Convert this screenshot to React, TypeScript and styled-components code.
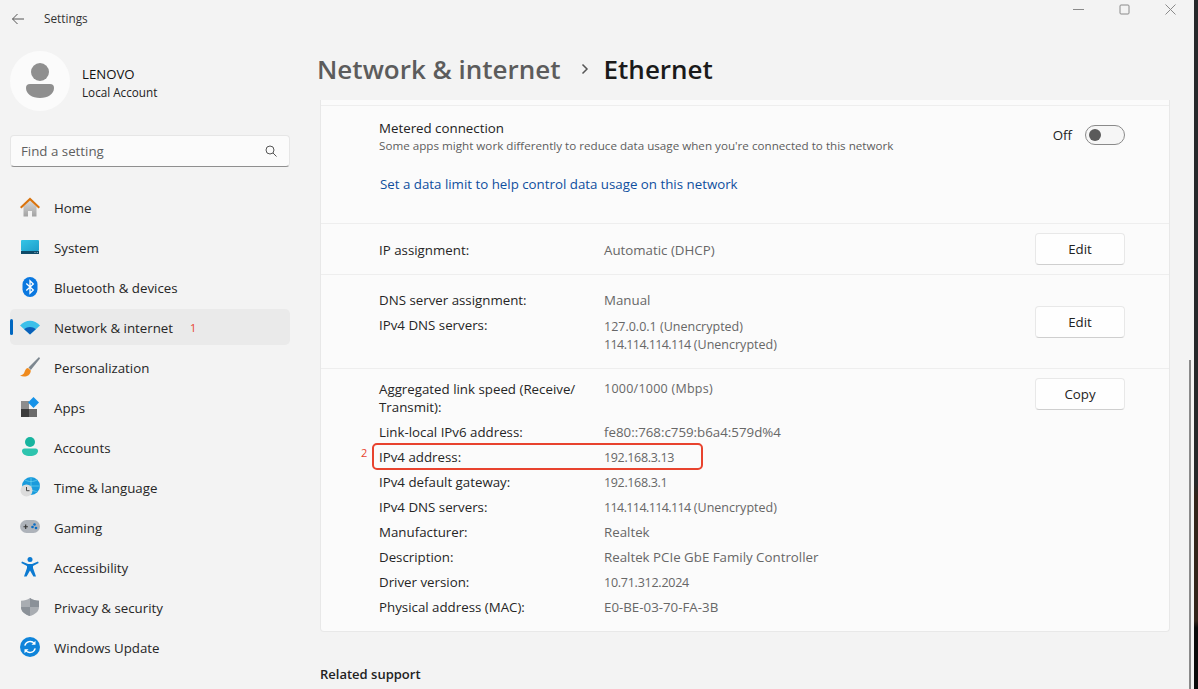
import styled, { createGlobalStyle } from 'styled-components';
import { ReactNode } from 'react';

const GlobalStyle = createGlobalStyle`
  html, body {
    margin: 0;
    padding: 0;
    height: 100%;
    overflow: hidden;
    background: #f3f3f3;
    font-family: "Open Sans", "Noto Sans", sans-serif;
    color: #1b1b1b;
  }
`;

const Window = styled.div`
  position: relative;
  display: flex;
  flex-direction: column;
  width: 1198px;
  height: 689px;
  overflow: hidden;
  background: #f3f3f3;
  border-right: 4px solid;
  border-image: linear-gradient(#26282a 0 70%, #33241a 72% 90%, #0a0a0a 91%) 1;
  box-sizing: border-box;
`;

const TitleBar = styled.div`
  display: flex;
  align-items: center;
  height: 38px;
  padding-left: 11px;
  flex: none;
`;

const BackButton = styled.svg`
  width: 14px;
  height: 14px;
  margin-right: 19px;
`;

const AppTitle = styled.span`
  padding-bottom: 2px;
  font-size: 11.8px;
  color: #333;
`;

const WindowControls = styled.div`
  display: flex;
  align-items: flex-start;
  gap: 35px;
  margin-left: auto;
  margin-right: 18px;
  align-self: flex-start;
  padding-top: 4px;
`;

const Body = styled.div`
  display: flex;
  flex: 1;
  min-height: 0;
`;

const Sidebar = styled.nav`
  width: 280px;
  flex: none;
  padding: 13px 0 0 10px;
`;

const Profile = styled.div`
  display: flex;
  align-items: center;
  gap: 12px;
`;

const Avatar = styled.div`
  display: flex;
  align-items: center;
  justify-content: center;
  width: 60px;
  height: 60px;
  border-radius: 50%;
  background: #fbfbfb;
`;

const ProfileText = styled.div`
  padding-top: 4px;
`;

const ProfileName = styled.div`
  font-size: 13.2px;
  font-weight: 500;
  line-height: 18px;
  color: #111;
`;

const ProfileSub = styled.div`
  font-size: 11.7px;
  line-height: 18px;
  color: #222;
`;

const SearchBox = styled.div`
  display: flex;
  align-items: center;
  justify-content: space-between;
  box-sizing: border-box;
  width: 280px;
  height: 32px;
  margin-top: 24px;
  padding: 0 12px 0 10px;
  background: #fbfbfb;
  border: 1px solid #e6e6e6;
  border-bottom-color: #8f8f8f;
  border-radius: 4px;
  font-size: 13.3px;
  color: #5f5f5f;
`;

const NavList = styled.div`
  display: flex;
  flex-direction: column;
  margin-top: 22px;
`;

const NavRow = styled.div<{ $active?: boolean }>`
  position: relative;
  display: flex;
  align-items: center;
  height: 36px;
  margin-bottom: 4px;
  padding-left: 10px;
  border-radius: 5px;
  font-size: 13.3px;
  color: #262626;
  background: ${(p) => (p.$active ? '#eaeaea' : 'transparent')};
`;

const NavLabel = styled.span`
  padding-top: 1px;
`;

const ActiveMark = styled.span`
  position: absolute;
  left: 0;
  top: 10px;
  width: 3px;
  height: 16px;
  border-radius: 2px;
  background: #0067c0;
`;

const NavIcon = styled.svg`
  width: 20px;
  height: 20px;
  margin-right: 14px;
  flex: none;
`;

const Marker = styled.span`
  font-size: 11px;
  color: #e8432e;
`;

const NavMarker = styled(Marker)`
  margin-left: 17px;
  font-weight: 500;
`;

const Main = styled.main`
  position: relative;
  flex: 1;
  min-width: 0;
  padding: 0 0 0 30px;
`;

const Breadcrumb = styled.div`
  display: flex;
  align-items: center;
  box-sizing: border-box;
  height: 62px;
  margin-left: -3px;
  padding-bottom: 1px;
  font-size: 26px;
  font-weight: 600;
`;

const ParentCrumb = styled.span`
  color: #5c5c5c;
`;

const CrumbSeparator = styled.svg`
  width: 12px;
  height: 12px;
  margin: 1px 13px 0 18px;
`;

const CurrentCrumb = styled.span`
  color: #1a1a1a;
`;

const Card = styled.section`
  box-sizing: border-box;
  width: 850px;
  padding-top: 5px;
  background: #fbfbfb;
  border: 1px solid #e8e8e8;
  border-top: none;
  border-radius: 0 0 4px 4px;
`;

const Section = styled.div`
  position: relative;
  display: flex;
  justify-content: space-between;
  box-sizing: border-box;
  border-top: 1px solid #eeeeee;
  padding-left: 58px;
  padding-right: 44px;
`;

const MeteredSection = styled(Section)`
  height: 118px;
  padding-top: 13px;
`;

const SettingTitle = styled.div`
  font-size: 13.3px;
  line-height: 18px;
  color: #222;
`;

const SettingHint = styled.div`
  margin-top: 1px;
  font-size: 11.65px;
  line-height: 16px;
  color: #5d5d5d;
`;

const SettingLink = styled.div`
  margin-top: 21px;
  margin-left: 1px;
  font-size: 13.3px;
  line-height: 18px;
  color: #0f4f9e;
`;

const ToggleRow = styled.div`
  display: flex;
  align-items: center;
  align-self: flex-start;
  gap: 13px;
  height: 18px;
  margin-top: 7px;
  font-size: 13.3px;
  color: #222;
`;

const Toggle = styled.div`
  display: flex;
  align-items: center;
  box-sizing: border-box;
  width: 40px;
  height: 20px;
  padding: 0 0 1px 3px;
  border: 1px solid #8a8a8a;
  border-radius: 10px;
  background: #f6f6f6;
`;

const ToggleKnob = styled.span`
  width: 12px;
  height: 12px;
  border-radius: 50%;
  background: #5a5a5a;
`;

const InfoGrid = styled.div`
  display: grid;
  grid-template-columns: 225px 1fr;
  row-gap: 7px;
  align-self: flex-start;
  width: 520px;
  font-size: 13.3px;
  line-height: 18px;
`;

const InfoLabel = styled.div`
  color: #262626;
`;

const InfoValue = styled.div`
  color: #676767;
`;

// the reference font has narrow digits, so values made of numbers are set smaller
const NumberValue = styled(InfoValue)<{ $drop: number }>`
  margin-top: ${(p) => p.$drop}px;
  margin-bottom: ${(p) => -p.$drop}px;
  font-size: 12.5px;
`;

const NumberRun = styled.span<{ $spacing: number }>`
  letter-spacing: ${(p) => p.$spacing}px;
`;

const ActionButton = styled.div`
  display: flex;
  align-items: center;
  justify-content: center;
  flex: none;
  align-self: flex-start;
  width: 90px;
  height: 32px;
  box-sizing: border-box;
  background: #fefefe;
  border: 1px solid #e8e8e8;
  border-bottom-color: #cfcfcf;
  border-radius: 4px;
  font-size: 13.3px;
  color: #222;
`;

const IpSection = styled(Section)`
  height: 51px;
  padding-top: 17px;
  & > ${ActionButton} {
    margin-top: -8px;
  }
`;

const DnsSection = styled(Section)`
  height: 94px;
  padding-top: 16px;
  & > ${ActionButton} {
    margin-top: 15px;
  }
`;

const DetailsSection = styled(Section)`
  height: 263px;
  padding-top: 11px;
  & > ${ActionButton} {
    margin-top: -2px;
  }
`;

const Highlight = styled.div`
  position: absolute;
  left: 51px;
  top: 74px;
  width: 331px;
  height: 27px;
  box-sizing: border-box;
  border: 2.5px solid #e8432e;
  border-radius: 5px;
`;

const HighlightMarker = styled(Marker)`
  position: absolute;
  left: 40px;
  top: 76px;
`;

const RelatedTitle = styled.div`
  margin-top: 33px;
  font-size: 13px;
  font-weight: 600;
  line-height: 18px;
  color: #222;
`;

const ScrollThumb = styled.div`
  position: absolute;
  right: 3px;
  top: 360px;
  bottom: 0;
  width: 2px;
  background: #8a8a8a;
`;

const navItems: { label: string; icon: ReactNode; marker?: string; active?: boolean }[] = [
  {
    label: 'Home',
    icon: (
      <>
        <defs>
          <linearGradient id="homeBody" x1="0" y1="0" x2="0" y2="1">
            <stop offset="0" stopColor="#d8d8d8" />
            <stop offset="1" stopColor="#a2a2a2" />
          </linearGradient>
        </defs>
        <path d="M3.5 9.5 10 3.5l6.5 6V19.500H12V14H8v5.500H3.500z" fill="url(#homeBody)" />
        <path d="M0 10 10 .5 20 10l-1.400 1.500L10 3.400 1.400 11.500z" fill="#d9730d" />
      </>
    ),
  },
  {
    label: 'System',
    icon: (
      <>
        <defs>
          <linearGradient id="systemScreen" x1="0" y1="0" x2="1" y2="1">
            <stop offset="0" stopColor="#35c5e6" />
            <stop offset="1" stopColor="#1e9ecb" />
          </linearGradient>
        </defs>
        <rect x="1" y="3" width="18" height="11" rx="1" fill="url(#systemScreen)" />
        <rect x="1" y="14" width="18" height="3" fill="#0f4a68" />
        <path d="M14.500 15.500h1M16.800 15.500h1" stroke="#cde" strokeWidth=".8" />
      </>
    ),
  },
  {
    label: 'Bluetooth & devices',
    icon: (
      <>
        <rect x="2.500" y="0" width="15" height="20" rx="7.500" fill="#0a78e0" />
        <path d="M6.300 6.500 13.300 13 10 16.300V3.700L13.300 7 6.300 13.500" fill="none" stroke="#fff" strokeWidth="1.300" />
      </>
    ),
  },
  {
    label: 'Network & internet',
    active: true,
    marker: '1',
    icon: (
      <>
        <path d="M0 8.500C5.500 2 14.500 2 20 8.500L10 17.500z" fill="#3cc0ea" />
        <path d="M4.200 12.300c3.200-3.200 8.400-3.200 11.600 0L10 17.500z" fill="#0a5fb8" />
      </>
    ),
  },
  {
    label: 'Personalization',
    icon: (
      <>
        <path d="M19 0 8.500 10.500l2.300 2.400L20 1.500z" fill="#7d8790" />
        <path d="M8 11c-3 .5-3 3.500-4 5.200-.7 1.200-2.500 2-4 2.300 3.500 2 10.500 1.400 10.800-5z" fill="#ef8a1d" />
      </>
    ),
  },
  {
    label: 'Apps',
    icon: (
      <>
        <rect x="1" y="4" width="8" height="8" fill="#8d8d8d" />
        <rect x="1" y="12" width="8" height="8" fill="#3c3c3c" />
        <rect x="9" y="12" width="8" height="8" fill="#6a6a6a" />
        <path d="M13.500 0 19 5.500 13.500 11 8 5.500z" fill="#1592e8" />
      </>
    ),
  },
  {
    label: 'Accounts',
    icon: (
      <>
        <circle cx="10" cy="5" r="5" fill="#17b49f" />
        <path d="M2 14a2.500 2.500 0 0 1 2.500-2.500h11A2.500 2.500 0 0 1 18 14c0 3-3.500 5-8 5s-8-2-8-5z" fill="#2ec4ae" />
      </>
    ),
  },
  {
    label: 'Time & language',
    icon: (
      <>
        <circle cx="11" cy="9" r="9" fill="#1a9bdc" />
        <path d="M11 0v18M2 9h18M5 3c4 2 8 2 12 0M5 15c4-2 8-2 12 0" stroke="#6fd3ee" strokeWidth=".7" fill="none" />
        <circle cx="6.500" cy="13.500" r="6" fill="#dcdcdc" />
        <path d="M6.500 10v3.700h3" stroke="#444" strokeWidth="1" fill="none" />
      </>
    ),
  },
  {
    label: 'Gaming',
    icon: (
      <>
        <rect x="0" y="3" width="20" height="13" rx="6.500" fill="#aeb3ba" />
        <path d="M3.500 9.800h4.400M5.700 7.600V12" stroke="#333" strokeWidth="1.100" />
        <circle cx="14.500" cy="7.500" r="1.300" fill="#0a6cc4" />
        <circle cx="12.500" cy="10" r="1.300" fill="#0a6cc4" />
        <circle cx="16" cy="11" r="1.300" fill="#0a6cc4" />
      </>
    ),
  },
  {
    label: 'Accessibility',
    icon: (
      <>
        <circle cx="10" cy="2.500" r="2.500" fill="#0b7ad1" />
        <path d="M2 4.500 8 7h4l6-2.500.7 1.600L13 9v2l3 8.500h-2.600L10 13.500 6.600 19.500H4l3-8.500V9L1.300 6.100z" fill="#0b7ad1" />
      </>
    ),
  },
  {
    label: 'Privacy & security',
    icon: (
      <>
        <path d="M10 1c2.500 2 5.500 2.600 9 2.800V10c0 5-4.500 7.500-9 9-4.500-1.500-9-4-9-9V3.800C4.500 3.600 7.500 3 10 1z" fill="#a9adb2" />
        <path d="M10 1c2.500 2 5.500 2.600 9 2.800V10H10z" fill="#8b9198" />
        <path d="M10 10v9c-4.500-1.500-9-4-9-9z" fill="#8b9198" />
      </>
    ),
  },
  {
    label: 'Windows Update',
    icon: (
      <>
        <circle cx="10" cy="10" r="10" fill="#0f84da" />
        <path d="M4.800 8.600A5.500 5.500 0 0 1 14.400 6.600M15.200 11.400A5.500 5.500 0 0 1 5.600 13.400" stroke="#fff" strokeWidth="1.400" fill="none" />
        <path d="M15.500 3.800v4h-4zM4.500 16.200v-4h4z" fill="#fff" />
      </>
    ),
  },
];

export default function App() {
  return (
    <>
      <GlobalStyle />
      <Window>
        <TitleBar>
          <BackButton viewBox="0 0 14 14" fill="none" stroke="#555" strokeWidth="1">
            <path d="M13 7H1.500M6.500 2 1.500 7l5 5" />
          </BackButton>
          <AppTitle>Settings</AppTitle>
          <WindowControls>
            <svg width="11" height="11" viewBox="0 0 11 11" stroke="#8a8a8a" fill="none">
              <path d="M0 5.500h11" />
            </svg>
            <svg width="11" height="11" viewBox="0 0 11 11" stroke="#8a8a8a" fill="none">
              <rect x="1" y="1" width="9" height="9" rx="1" />
            </svg>
            <svg width="11" height="11" viewBox="0 0 11 11" stroke="#8a8a8a" fill="none">
              <path d="M.5.5l10 10M10.500.5l-10 10" />
            </svg>
          </WindowControls>
        </TitleBar>
        <Body>
          <Sidebar>
            <Profile>
              <Avatar>
                <svg width="30" height="36" viewBox="0 0 30 36" fill="#8f8f8f">
                  <circle cx="15" cy="9" r="9" />
                  <path d="M1 25a4 4 0 0 1 4-4h20a4 4 0 0 1 4 4c0 6-6 10-14 10S1 31 1 25z" />
                </svg>
              </Avatar>
              <ProfileText>
                <ProfileName>LENOVO</ProfileName>
                <ProfileSub>Local Account</ProfileSub>
              </ProfileText>
            </Profile>
            <SearchBox>
              Find a setting
              <svg width="12" height="12" viewBox="0 0 12 12" fill="none" stroke="#555" strokeWidth="1">
                <circle cx="5" cy="5" r="4" />
                <path d="M8 8l3.500 3.500" />
              </svg>
            </SearchBox>
            <NavList>
              {navItems.map((item) => (
                <NavRow key={item.label} $active={item.active}>
                  {item.active && <ActiveMark />}
                  <NavIcon viewBox="0 0 20 20">{item.icon}</NavIcon>
                  <NavLabel>{item.label}</NavLabel>
                  {item.marker && <NavMarker>{item.marker}</NavMarker>}
                </NavRow>
              ))}
            </NavList>
          </Sidebar>
          <Main>
            <Breadcrumb>
              <ParentCrumb>Network &amp; internet</ParentCrumb>
              <CrumbSeparator viewBox="0 0 12 12" fill="none" stroke="#555" strokeWidth="1.500">
                <path d="M3.500 1.500 8 6l-4.500 4.500" />
              </CrumbSeparator>
              <CurrentCrumb>Ethernet</CurrentCrumb>
            </Breadcrumb>
            <Card>
              <MeteredSection>
                <div>
                  <SettingTitle>Metered connection</SettingTitle>
                  <SettingHint>Some apps might work differently to reduce data usage when you're connected to this network</SettingHint>
                  <SettingLink>Set a data limit to help control data usage on this network</SettingLink>
                </div>
                <ToggleRow>
                  Off
                  <Toggle>
                    <ToggleKnob />
                  </Toggle>
                </ToggleRow>
              </MeteredSection>
              <IpSection>
                <InfoGrid>
                  <InfoLabel>IP assignment:</InfoLabel>
                  <InfoValue>Automatic (DHCP)</InfoValue>
                </InfoGrid>
                <ActionButton>Edit</ActionButton>
              </IpSection>
              <DnsSection>
                <InfoGrid>
                  <InfoLabel>DNS server assignment:</InfoLabel>
                  <InfoValue>Manual</InfoValue>
                  <InfoLabel>IPv4 DNS servers:</InfoLabel>
                  <NumberValue $drop={2}>
                    127.0.0.1 (Unencrypted)
                    <br />
                    <NumberRun $spacing={-0.6}>114.114.114.114</NumberRun> (Unencrypted)
                  </NumberValue>
                </InfoGrid>
                <ActionButton>Edit</ActionButton>
              </DnsSection>
              <DetailsSection>
                <InfoGrid>
                  <InfoLabel>
                    Aggregated link speed (Receive/
                    <br />
                    Transmit):
                  </InfoLabel>
                  <NumberValue $drop={0}>
                    <NumberRun $spacing={0.25}>1000/1000 (Mbps)</NumberRun>
                  </NumberValue>
                  <InfoLabel>Link-local IPv6 address:</InfoLabel>
                  <InfoValue>fe80::768:c759:b6a4:579d%4</InfoValue>
                  <InfoLabel>IPv4 address:</InfoLabel>
                  <NumberValue $drop={1}>
                    <NumberRun $spacing={-0.35}>192.168.3.13</NumberRun>
                  </NumberValue>
                  <InfoLabel>IPv4 default gateway:</InfoLabel>
                  <NumberValue $drop={1}>
                    <NumberRun $spacing={-0.35}>192.168.3.1</NumberRun>
                  </NumberValue>
                  <InfoLabel>IPv4 DNS servers:</InfoLabel>
                  <NumberValue $drop={1}>
                    <NumberRun $spacing={-0.6}>114.114.114.114</NumberRun> (Unencrypted)
                  </NumberValue>
                  <InfoLabel>Manufacturer:</InfoLabel>
                  <InfoValue>Realtek</InfoValue>
                  <InfoLabel>Description:</InfoLabel>
                  <InfoValue>Realtek PCIe GbE Family Controller</InfoValue>
                  <InfoLabel>Driver version:</InfoLabel>
                  <NumberValue $drop={1}>
                    <NumberRun $spacing={-0.25}>10.71.312.2024</NumberRun>
                  </NumberValue>
                  <InfoLabel>Physical address (MAC):</InfoLabel>
                  <InfoValue>E0-BE-03-70-FA-3B</InfoValue>
                </InfoGrid>
                <ActionButton>Copy</ActionButton>
                <Highlight />
                <HighlightMarker>2</HighlightMarker>
              </DetailsSection>
            </Card>
            <RelatedTitle>Related support</RelatedTitle>
          </Main>
        </Body>
        <ScrollThumb />
      </Window>
    </>
  );
}
